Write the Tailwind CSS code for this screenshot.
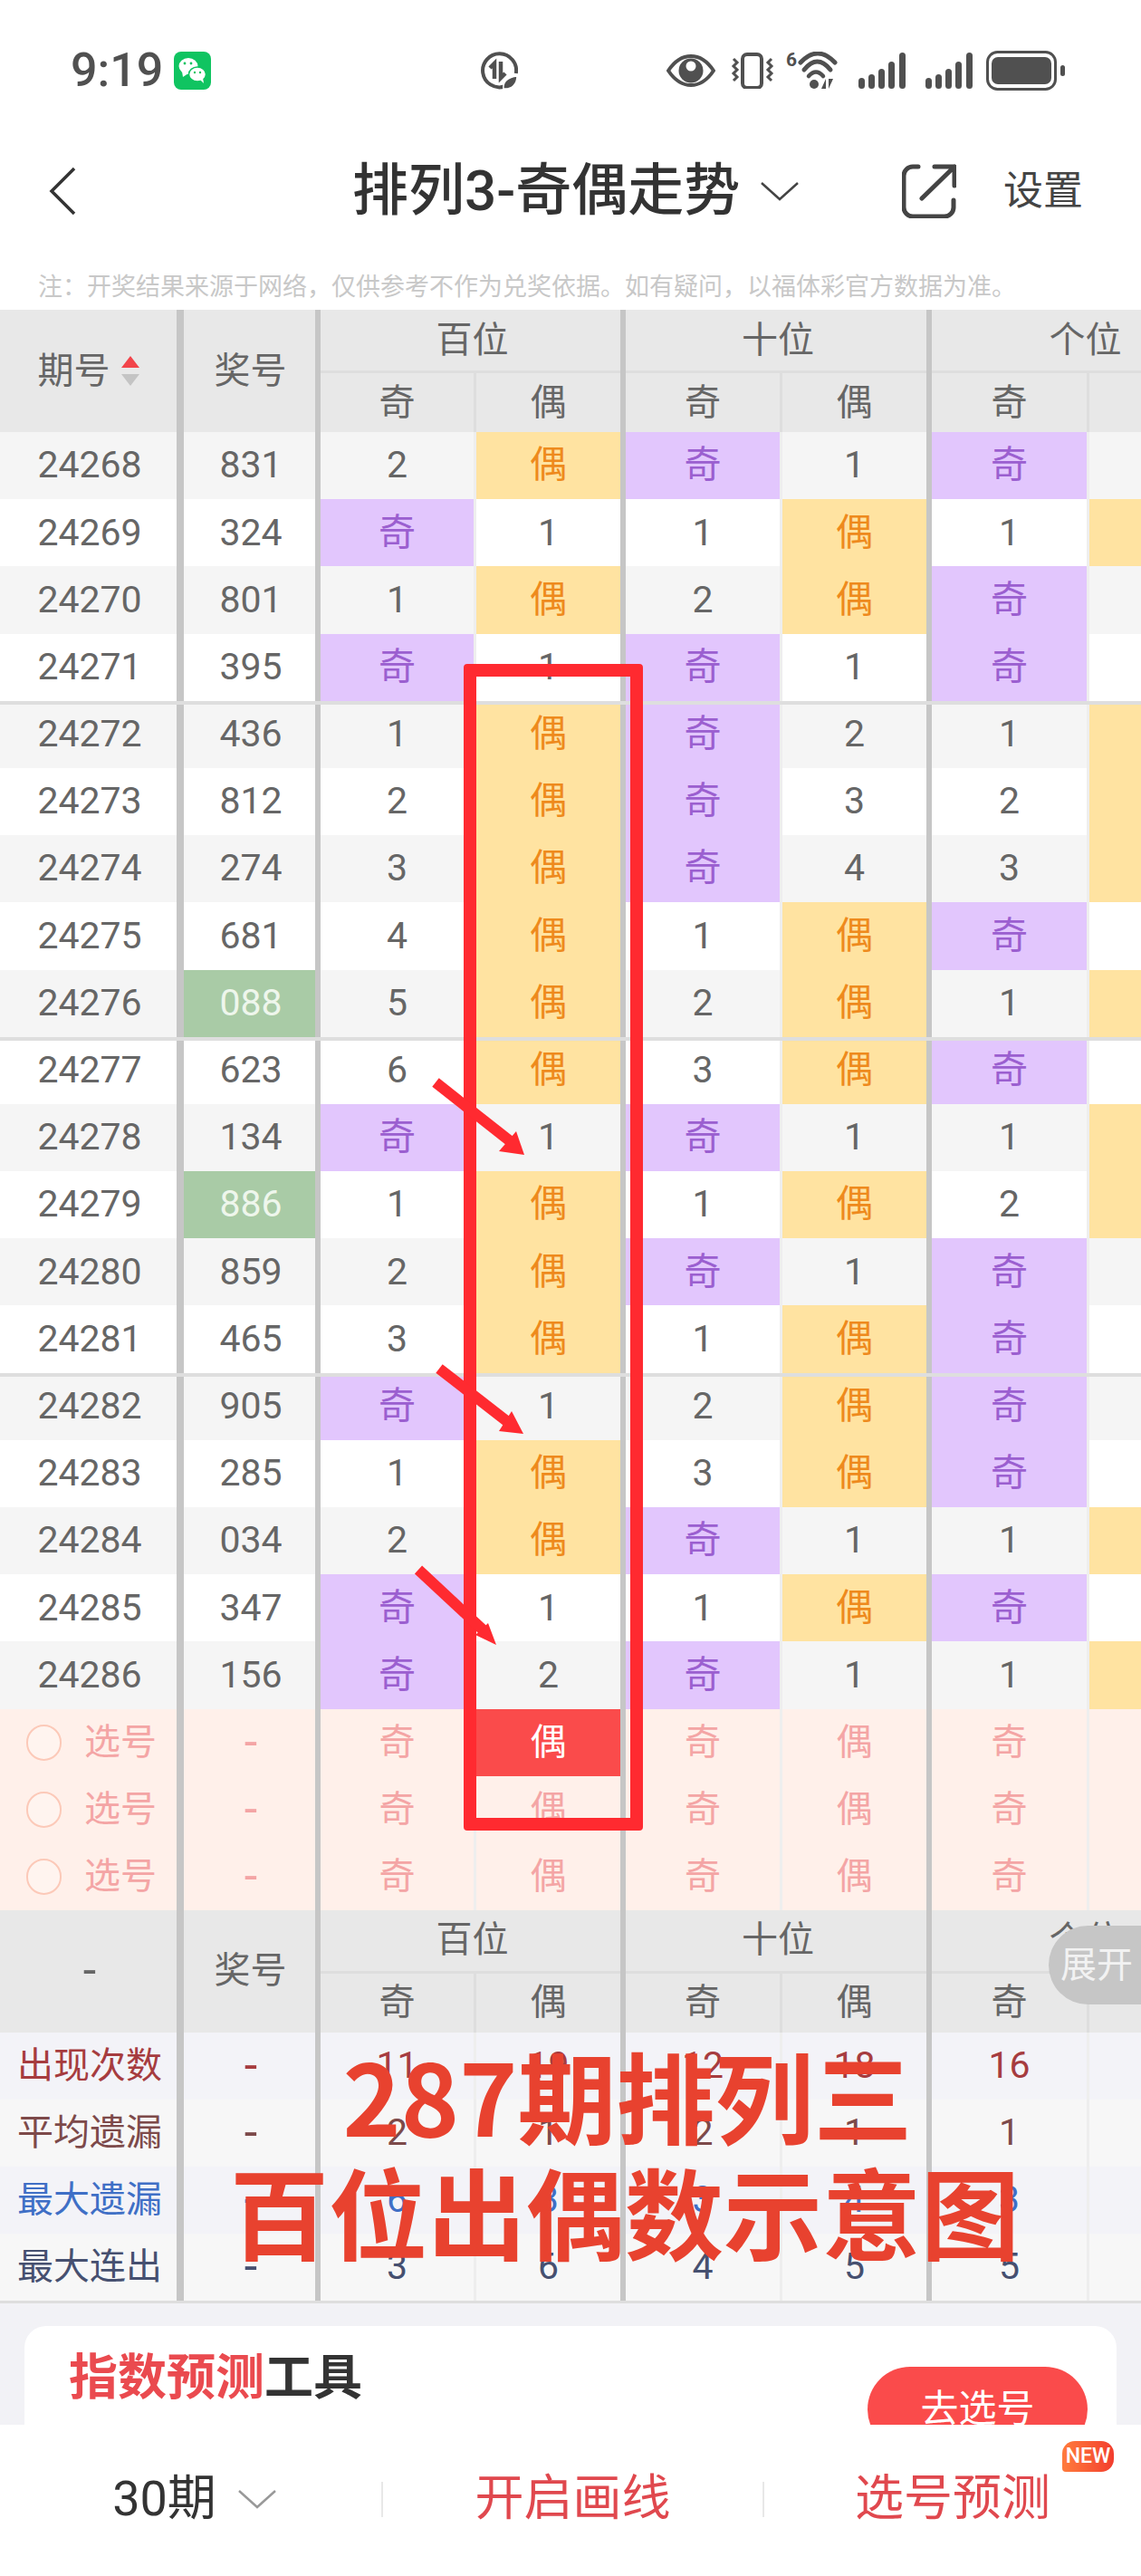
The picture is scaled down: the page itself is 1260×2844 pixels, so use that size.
<!DOCTYPE html>
<html lang="zh-CN">
  <head>
    <meta charset="UTF-8" />
    <meta name="viewport" content="width=device-width, initial-scale=1.0" />
    <title>排列3-奇偶走势</title>
    <script src="https://cdn.jsdelivr.net/npm/@tailwindcss/browser@4"></script>
  </head>
  <body class="bg-white">
    <div class="relative w-[1260px] h-[2844px] overflow-hidden flex flex-col font-['Roboto','Noto_Sans_CJK_SC',sans-serif] text-[#666666]">
      <!-- status bar -->
      <div class="flex items-center h-[60px] mt-[48px] mb-[22px] shrink-0 text-[#505050]">
        <span class="ml-[78px] w-[106px] text-[52px] font-medium leading-none whitespace-nowrap">9:19</span>
        <svg class="ml-[8px] shrink-0" width="41" height="42" viewBox="0 0 41 42">
          <rect width="41" height="42" rx="8" fill="#10c461" />
          <ellipse cx="16" cy="16" rx="10.5" ry="9" fill="#fff" />
          <path d="M9 22l1 6 6-4z" fill="#fff" />
          <ellipse cx="26" cy="25" rx="9.5" ry="8" fill="#fff" stroke="#10c461" stroke-width="1.5" />
          <path d="M29 31l4 4-1-6z" fill="#fff" />
          <circle cx="12" cy="13" r="1.4" fill="#10c461" /><circle cx="19" cy="13" r="1.4" fill="#10c461" />
          <circle cx="23" cy="23" r="1.2" fill="#10c461" /><circle cx="29" cy="23" r="1.2" fill="#10c461" />
        </svg>
        <svg class="ml-[298px] shrink-0" width="41" height="42" viewBox="0 0 41 42" fill="none" stroke="#505050">
          <path d="M26 38.500A18.500 18.500 0 1 1 38.800 24" stroke-width="4" />
          <path d="M15 30V13l-5 5M22 11v18l5-5" stroke-width="4.500" />
          <path d="M25 41c-1-8 5-13 15-14 0 9-6 15-15 14z" fill="#505050" stroke="#fff" stroke-width="1.500" />
        </svg>
        <svg class="ml-[164px] shrink-0" width="54" height="36" viewBox="0 0 54 36">
          <path d="M2 18C10 6 18 2 27 2s17 4 25 16c-8 12-16 16-25 16S10 30 2 18z" fill="#fff" stroke="#505050" stroke-width="4" />
          <circle cx="27" cy="18" r="13.500" fill="#505050" />
          <circle cx="27" cy="13" r="5.500" fill="#fff" />
        </svg>
        <svg class="ml-[17px] shrink-0" width="48" height="40" viewBox="0 0 48 40" fill="none" stroke="#505050">
          <rect x="13" y="2" width="21" height="37" rx="5" stroke-width="4" />
          <path d="M3 7l4 4-4 4 4 4-4 4 4 4-4 4M45 7l-4 4 4 4-4 4 4 4-4 4 4 4" stroke-width="3" />
        </svg>
        <svg class="ml-[13px] shrink-0" width="60" height="42" viewBox="0 0 60 42" fill="none" stroke="#505050">
          <text x="0" y="16" font-size="21" font-weight="700" fill="#505050" stroke="none" font-family="Roboto, sans-serif">6</text>
          <path d="M16 12Q35-8 54 12" stroke-width="5" stroke-linecap="round" />
          <path d="M20 20Q34.500 2 49 20" stroke-width="5" stroke-linecap="round" />
          <path d="M25 27Q33 18 41 27" stroke-width="4.500" stroke-linecap="round" />
          <circle cx="31" cy="36" r="5" fill="#505050" stroke="none" />
          <path d="M44 30v11h-5zM47 41V30h5z" fill="#505050" stroke="none" />
        </svg>
        <svg class="ml-[20px] shrink-0" width="52" height="40" viewBox="0 0 52 40" fill="#505050">
          <rect x="0" y="28" width="7" height="12" rx="3.500" /><rect x="11" y="24" width="7" height="16" rx="3.500" />
          <rect x="22" y="18" width="7" height="22" rx="3.500" /><rect x="33" y="10" width="7" height="30" rx="3.500" />
          <rect x="45" y="0" width="7" height="40" rx="3.500" />
        </svg>
        <svg class="ml-[22px] shrink-0" width="52" height="40" viewBox="0 0 52 40" fill="#505050">
          <rect x="0" y="28" width="7" height="12" rx="3.500" /><rect x="11" y="24" width="7" height="16" rx="3.500" />
          <rect x="22" y="18" width="7" height="22" rx="3.500" /><rect x="33" y="10" width="7" height="30" rx="3.500" />
          <rect x="45" y="0" width="7" height="40" rx="3.500" />
        </svg>
        <svg class="ml-[15px] shrink-0" width="88" height="44" viewBox="0 0 88 44">
          <rect x="1.500" y="1.500" width="75" height="41" rx="11" fill="none" stroke="#505050" stroke-width="3" />
          <rect x="6" y="7" width="66" height="30" rx="7" fill="#505050" />
          <rect x="82" y="16" width="5" height="12" rx="2.500" fill="#505050" />
        </svg>
      </div>

      <!-- title bar -->
      <div class="flex items-center h-[162px] shrink-0">
        <svg class="ml-[54px] shrink-0" width="30" height="54" viewBox="0 0 30 54" fill="none" stroke="#333333" stroke-width="3.500"><path d="M28 2L3 27l25 25" /></svg>
        <h1 class="ml-[305px] w-[427px] text-[62px] leading-none font-medium text-[#333333] whitespace-nowrap">排列3-奇偶走势</h1>
        <svg class="ml-[24px] shrink-0" width="42" height="22" viewBox="0 0 42 22" fill="none" stroke="#444444" stroke-width="2.500"><path d="M1 2l20 18L41 2" /></svg>
        <svg class="ml-[114px] shrink-0" width="60" height="60" viewBox="0 0 60 60" fill="none" stroke="#444444" stroke-width="5" stroke-linecap="round" stroke-linejoin="round">
          <path d="M18 3h-6a10 10 0 0 0-10 10v35a10 10 0 0 0 10 10h35a10 10 0 0 0 10-10v-8" />
          <path d="M22 38L58 3M36 3h22v21" />
        </svg>
        <span class="ml-[52px] text-[44px] leading-none text-[#444444] whitespace-nowrap">设置</span>
      </div>
      <p class="h-[50px] pl-[42px] shrink-0 text-[27px] leading-[50px] text-[#c8c8c8] whitespace-nowrap">注：开奖结果来源于网络，仅供参考不作为兑奖依据。如有疑问，以福体彩官方数据为准。</p>

      <!-- trend table -->
      <div id="table" class="shrink-0 text-[41px]"></div>

      <!-- tool card -->
      <div class="flex-1 min-h-0 overflow-hidden bg-[#f2f2f6] pt-[25px] px-[27px]">
        <div class="bg-white rounded-t-[24px] h-[300px] flex justify-between items-start">
          <h2 class="ml-[49px] mt-[30px] text-[54px] leading-[56px] font-bold text-[#333333]"><span class="text-[#ea4a4f]">指数预测</span>工具</h2>
          <button class="mt-[45px] mr-[32px] w-[243px] h-[94px] rounded-full bg-[#fa4b4b] text-white text-[42px]">去选号</button>
        </div>
      </div>

      <!-- bottom bar -->
      <div class="h-[167px] shrink-0 bg-white flex items-center pb-[3px]">
        <div class="w-[421px] pl-[8px] flex items-center justify-center text-[#333333]">
          <span class="text-[54px] leading-none">30期</span>
          <svg class="ml-[24px]" width="42" height="22" viewBox="0 0 42 22" fill="none" stroke="#999999" stroke-width="2.500"><path d="M1 2l20 18L41 2" /></svg>
        </div>
        <div class="w-[2px] h-[39px] bg-[#e8e8e8]"></div>
        <div class="w-[419px] text-center text-[54px] leading-none text-[#e0484e]">开启画线</div>
        <div class="w-[2px] h-[39px] bg-[#e8e8e8]"></div>
        <div class="relative flex-1 text-center text-[54px] leading-none text-[#e0484e]">
          选号预测
          <span class="absolute left-[329px] top-[-37px] w-[57px] h-[34px] rounded-[14px] rounded-bl-[4px] bg-gradient-to-r from-[#ff7a3c] to-[#f23c2e] text-white text-[23px] leading-[34px] font-medium">NEW</span>
        </div>
      </div>

      <!-- annotations drawn over the table -->
      <div class="absolute left-[512px] top-[733px] w-[198px] h-[1288px] border-[14px] border-[#ff2a30] rounded-[4px]"></div>
      <svg class="absolute left-0 top-0 pointer-events-none" width="1260" height="2844" viewBox="0 0 1260 2844" fill="#ff2a30" stroke="#ff2a30" stroke-width="12">
        <path d="M481 1195L566 1262" />
        <path d="M579 1275L570 1249 551 1271z" stroke="none" />
        <path d="M485 1511L566 1574" />
        <path d="M578 1583L565 1558 551 1580z" stroke="none" />
        <path d="M462 1733L536 1802" />
        <path d="M548 1816L539 1792 525 1805z" stroke="none" />
      </svg>
      <div class="absolute left-[190px] top-[2248px] w-[1000px] text-center text-[109px] leading-[128px] font-bold text-[#e8422f] font-['Noto_Sans_CJK_SC',sans-serif] whitespace-nowrap">
        <div class="pl-[6px]">287期排列三</div>
        <div>百位出偶数示意图</div>
      </div>

      <!-- expand tab -->
      <div class="absolute right-0 top-[2126px] w-[102px] h-[87px] rounded-l-[44px] bg-[#c6c6c6] text-[#f2f2f2] text-[40px] leading-[87px] pl-[13px] whitespace-nowrap">展开</div>
    </div>

    <script>
      const cols = [
        "w-[172px] border-r-[3px] border-[#eeeeee]",
        "w-[165px] border-r-[6px] border-[#c6c6c6]",
        "w-[173px] border-r-[3px] border-[#eeeeee]",
        "w-[165px] border-r-[6px] border-[#c6c6c6]",
        "w-[174px] border-r-[3px] border-[#eeeeee]",
        "w-[165px] border-r-[3px] border-[#eeeeee]",
      ];
      const col1 = "w-[203px] shrink-0 border-r-[8px] border-[#c6c6c6] flex items-center justify-center";
      const col2 = "w-[151px] shrink-0 border-r-[6px] border-[#c6c6c6] flex items-center justify-center";

      const rows = [
        ["24268", "831", "2", "偶", "奇", "1", "奇", ""],
        ["24269", "324", "奇", "1", "1", "偶", "1", "偶"],
        ["24270", "801", "1", "偶", "2", "偶", "奇", ""],
        ["24271", "395", "奇", "1", "奇", "1", "奇", ""],
        ["24272", "436", "1", "偶", "奇", "2", "1", "偶"],
        ["24273", "812", "2", "偶", "奇", "3", "2", "偶"],
        ["24274", "274", "3", "偶", "奇", "4", "3", "偶"],
        ["24275", "681", "4", "偶", "1", "偶", "奇", ""],
        ["24276", "088", "5", "偶", "2", "偶", "1", "偶"],
        ["24277", "623", "6", "偶", "3", "偶", "奇", ""],
        ["24278", "134", "奇", "1", "奇", "1", "1", "偶"],
        ["24279", "886", "1", "偶", "1", "偶", "2", "偶"],
        ["24280", "859", "2", "偶", "奇", "1", "奇", ""],
        ["24281", "465", "3", "偶", "1", "偶", "奇", ""],
        ["24282", "905", "奇", "1", "2", "偶", "奇", ""],
        ["24283", "285", "1", "偶", "3", "偶", "奇", ""],
        ["24284", "034", "2", "偶", "奇", "1", "1", "偶"],
        ["24285", "347", "奇", "1", "1", "偶", "奇", ""],
        ["24286", "156", "奇", "2", "奇", "1", "1", "偶"],
      ];
      const stats = [
        ["出现次数", "text-[#a63c3f]", "bg-[#f3f3f8]", ["11", "19", "12", "18", "16"]],
        ["平均遗漏", "text-[#7d4a4a]", "bg-[#f7f7f7]", ["2", "1", "2", "1", "1"]],
        ["最大遗漏", "text-[#3f6fc6]", "bg-[#f3f3f8]", ["6", "3", "3", "4", "3"]],
        ["最大连出", "text-[#465070]", "bg-[#f7f7f7]", ["3", "6", "4", "5", "5"]],
      ];
      const dash = `<span class="pl-[3px] text-[52px] leading-none">-</span>`;

      // the 6th column runs off the right edge, only its fill shows
      function valueCell(v, i) {
        let tone = "";
        if (v === "奇") tone = "bg-[#e2c6fd] text-[#9b5fd0]";
        if (v === "偶") tone = "bg-[#ffe3a1] text-[#ee8a1d]";
        const label = i === 5 ? "" : v;
        return `<div class="${cols[i]} shrink-0 h-full"><div class="w-full h-full flex items-center justify-center ${tone}">${label}</div></div>`;
      }

      function header(first) {
        const group = (name, a, w, rest) => `
          <div class="${w}">
            <div class="h-[70px] border-b-[3px] border-[#dedede] flex items-center justify-center text-[40px] ${rest}">${name}</div>
            <div class="h-[65px] flex">
              <div class="${a} shrink-0 flex items-center justify-center text-[40px]">奇</div>
              <div class="flex-1 flex items-center justify-center text-[40px]">${name === "个位" ? "" : "偶"}</div>
            </div>
          </div>`;
        return `
          <div class="flex h-[135px] bg-[#e8e8e8] overflow-hidden">
            <div class="${col1} text-[40px]">${first}</div>
            <div class="${col2} pl-[2px] text-[40px]">奖号</div>
            ${group("百位", "w-[172px] border-r-[3px] border-[#dedede]", "w-[337px] shrink-0 border-r-[6px] border-[#c6c6c6]", "pl-[4px]")}
            ${group("十位", "w-[173px] border-r-[3px] border-[#dedede]", "w-[338px] shrink-0 border-r-[6px] border-[#c6c6c6]", "pl-[4px]")}
            ${group("个位", "w-[174px] border-r-[3px] border-[#dedede]", "w-[339px] shrink-0", "")}
          </div>`;
      }

      const sortIcon = `<svg class="ml-[12px]" width="20" height="34" viewBox="0 0 20 34"><path d="M10 0l10 13H0z" fill="#f2444a"/><path d="M0 20h20L10 33z" fill="#c4c4c4"/></svg>`;

      let html = header(`期号${sortIcon}`);

      rows.forEach((r, i) => {
        const bg = i % 2 === 0 ? "bg-[#f5f5f5]" : "bg-white";
        const sep = [4, 9, 14].includes(i) ? `<div class="absolute left-0 right-0 top-0 h-[4px] bg-[#dedede]"></div>` : "";
        const lucky = r[1] === "088" || r[1] === "886";
        html += `
          <div class="relative flex h-[74.2px] overflow-hidden ${bg}">
            <div class="${col1} pl-[3px]">${r[0]}</div>
            <div class="${col2}"><div class="w-full h-full pl-[3px] flex items-center justify-center ${lucky ? "bg-[#a9cba6] text-[#eef6ec]" : ""}">${r[1]}</div></div>
            ${r.slice(2).map(valueCell).join("")}
            ${sep}
          </div>`;
      });

      for (let n = 0; n < 3; n++) {
        const cells = ["奇", "偶", "奇", "偶", "奇", ""].map((v, i) =>
          n === 0 && i === 1
            ? `<div class="${cols[i]} shrink-0 h-full bg-[#fa4b4b] text-white flex items-center justify-center">偶</div>`
            : `<div class="${cols[i]} shrink-0 h-full flex items-center justify-center">${v}</div>`
        );
        html += `
          <div class="flex h-[74px] overflow-hidden bg-[#fff0ea] text-[#f4a5a5] text-[40px]">
            <div class="${col1} justify-start pl-[29px]"><span class="w-[39px] h-[40px] rounded-full border-2 border-[#fcc9b8] bg-[#fff4ef]"></span><span class="ml-[25px]">选号</span></div>
            <div class="${col2}">${dash}</div>
            ${cells.join("")}
          </div>`;
      }

      html += header(dash);

      stats.forEach(([label, color, bg, vals]) => {
        html += `
          <div class="flex h-[74px] overflow-hidden ${bg} ${color}">
            <div class="${col1} pl-[3px] text-[40px]">${label}</div>
            <div class="${col2}">${dash}</div>
            ${vals.map((v, i) => `<div class="${cols[i]} shrink-0 h-full flex items-center justify-center">${v}</div>`).join("")}
            <div class="${cols[5]} shrink-0 h-full"></div>
          </div>`;
      });
      html += `<div class="h-[3px] bg-[#dedede]"></div>`;

      document.getElementById("table").innerHTML = html;
    </script>
  </body>
</html>
